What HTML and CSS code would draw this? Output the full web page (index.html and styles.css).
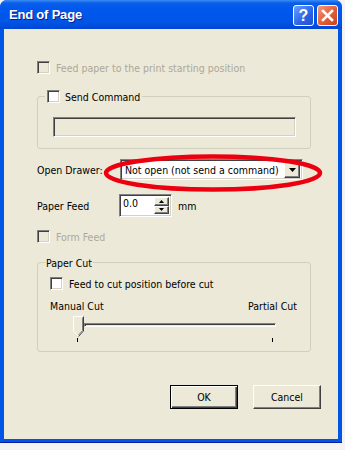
FILE: index.html
```html
<!DOCTYPE html>
<html lang="en">
<head>
    <meta charset="UTF-8">
    <title>End of Page</title>
    <link rel="stylesheet" href="styles.css">
</head>
<body>
<div class="window">
    <div class="titlebar">
        <span class="title">End of Page</span>
        <div class="tb-buttons">
            <span class="tb help">?</span>
            <span class="tb close">
                <svg width="13" height="13" viewBox="0 0 13 13"><path d="M2 2 L11 11 M11 2 L2 11" stroke="#fff" stroke-width="2.6" stroke-linecap="square"/></svg>
            </span>
        </div>
    </div>
    <div class="client">
        <!-- disabled option -->
        <div class="check-row disabled first">
            <span class="check"></span>
            <span>Feed paper to the print starting position</span>
        </div>

        <div class="group send">
            <div class="legend">
                <span class="check"></span>
                <span class="legend-text">Send Command</span>
            </div>
            <div class="edit off"></div>
        </div>

        <div class="field-row drawer">
            <span class="label">Open Drawer:</span>
            <div class="combo">
                <span class="combo-text">Not open (not send a command)</span>
                <span class="combo-btn"><svg width="7" height="4" viewBox="0 0 7 4"><path d="M0 0 H7 L3.5 4 Z" fill="#000"/></svg></span>
            </div>
        </div>

        <div class="field-row feed">
            <span class="label">Paper Feed</span>
            <div class="spin">
                <span class="spin-text">0.0</span>
                <span class="spin-btns">
                    <span class="spin-btn"><svg width="5" height="3" viewBox="0 0 5 3"><path d="M2.5 0 L5 3 H0 Z" fill="#000"/></svg></span>
                    <span class="spin-btn"><svg width="5" height="3" viewBox="0 0 5 3"><path d="M0 0 H5 L2.5 3 Z" fill="#000"/></svg></span>
                </span>
            </div>
            <span class="unit">mm</span>
        </div>

        <div class="check-row disabled formfeed">
            <span class="check"></span>
            <span>Form Feed</span>
        </div>

        <div class="group cut">
            <div class="legend">
                <span class="legend-text">Paper Cut</span>
            </div>
            <div class="check-row inner">
                <span class="check"></span>
                <span>Feed to cut position before cut</span>
            </div>
            <div class="slider-labels">
                <span>Manual Cut</span>
                <span>Partial Cut</span>
            </div>
            <div class="slider">
                <svg class="thumb" width="11" height="21" viewBox="0 0 11 21">
                    <path d="M0.5 0.5 H10.5 V15 L5.5 20.5 L0.5 15 Z" fill="#ece9d8" stroke="#fff"/>
                    <path d="M10.5 0.5 V15 L5.5 20.5" fill="none" stroke="#404040"/>
                    <path d="M9.5 1.5 V14.6 L5.5 19" fill="none" stroke="#808080"/>
                </svg>
                <div class="track"></div>
            </div>
            <div class="ticks">
                <span class="tick"></span>
                <span class="tick"></span>
            </div>
        </div>

        <div class="buttons">
            <span class="btn default">OK</span>
            <span class="btn">Cancel</span>
        </div>

        <svg class="mark" width="222" height="40" viewBox="0 0 222 40">
            <ellipse cx="111" cy="20" rx="107" ry="16.5" fill="none" stroke="#ec0010" stroke-width="4.5"/>
        </svg>
    </div>
</div>
</body>
</html>
```

FILE: styles.css
```css
* {
    margin: 0;
    padding: 0;
    box-sizing: border-box;
}

body {
    background: #f3f3f3;
    font-family: "DejaVu Sans Condensed", "Liberation Sans", sans-serif;
    font-size: 10.5px;
    color: #000;
}

.window {
    width: 342px;
    height: 443px;
    background: #0055e5;
    border-radius: 7px 7px 0 0;
    display: flex;
    flex-direction: column;
    padding: 0 4px 3px 4px;
    border-bottom: 1px solid #001ea0;
}

.titlebar {
    height: 29px;
    display: flex;
    align-items: center;
    justify-content: space-between;
    margin: 0 -4px;
    padding: 0 4px 0 9px;
    border-radius: 7px 7px 0 0;
    background: linear-gradient(#3b8cf5 0px, #0a5fe8 3px, #0058ee 8px, #0055e5 22px, #0046d4 29px);
}

.title {
    color: #fff;
    font-family: "Liberation Sans", sans-serif;
    font-weight: bold;
    font-size: 13px;
    text-shadow: 1px 1px 0 #0a1d8c;
    letter-spacing: -0.2px;
}

.tb-buttons {
    display: flex;
    gap: 3px;
    margin-top: 2px;
}

.tb {
    width: 21px;
    height: 21px;
    border: 1px solid #fff;
    border-radius: 3px;
    display: flex;
    align-items: center;
    justify-content: center;
}

.help {
    background: linear-gradient(135deg, #6aa0ff, #2a63e6 60%, #2050d0);
    color: #fff;
    font-family: "Liberation Sans", sans-serif;
    font-weight: bold;
    font-size: 16px;
}

.close {
    background: linear-gradient(135deg, #f49a7c, #e35c36 55%, #c8431e);
}

.client {
    flex: 1;
    background: #ece9d8;
    position: relative;
    display: flex;
    flex-direction: column;
    padding-left: 33px;
}

.check {
    width: 13px;
    height: 13px;
    background: #fff;
    border-top: 1px solid #808080;
    border-left: 1px solid #808080;
    border-right: 1px solid #fff;
    border-bottom: 1px solid #fff;
    box-shadow: inset 1px 1px 0 #404040, inset -1px -1px 0 #d4d0c8;
    flex: none;
}

.check-row {
    display: flex;
    align-items: center;
    gap: 6px;
    height: 13px;
}

.disabled {
    color: #aca899;
}

.disabled .check {
    background: #ece9d8;
}

.first {
    margin-top: 32px;
}

.group {
    position: relative;
    border: 1px solid #d0d0bf;
    border-radius: 3px;
    width: 274px;
}

.legend {
    position: absolute;
    top: -7px;
    left: 7px;
    background: #ece9d8;
    padding: 0 2px;
    display: flex;
    align-items: center;
    gap: 5px;
    height: 13px;
}

.send {
    margin-top: 22px;
    height: 53px;
    padding: 20px 0 0 15px;
}

.edit {
    width: 243px;
    height: 20px;
    border-top: 1px solid #808080;
    border-left: 1px solid #808080;
    border-right: 1px solid #fff;
    border-bottom: 1px solid #fff;
    box-shadow: inset 1px 1px 0 #404040, inset -1px -1px 0 #d4d0c8;
}

.edit.off {
    background: #ece9d8;
}

.field-row {
    display: flex;
    align-items: center;
}

.label {
    width: 83px;
}

.drawer {
    margin-top: 10px;
    height: 21px;
}

.combo {
    width: 183px;
    height: 21px;
    background: #fff;
    display: flex;
    align-items: center;
    justify-content: space-between;
    border-top: 1px solid #808080;
    border-left: 1px solid #808080;
    border-right: 1px solid #fff;
    border-bottom: 1px solid #fff;
    box-shadow: inset 1px 1px 0 #404040, inset -1px -1px 0 #d4d0c8;
    padding: 2px 2px 2px 4px;
}

.combo-btn,
.spin-btn {
    background: #ece9d8;
    display: flex;
    align-items: center;
    justify-content: center;
    border-top: 1px solid #fff;
    border-left: 1px solid #fff;
    border-right: 1px solid #404040;
    border-bottom: 1px solid #404040;
    box-shadow: inset -1px -1px 0 #808080;
}

.combo-btn {
    width: 16px;
    height: 17px;
}

.feed {
    margin-top: 14px;
    height: 23px;
}

.label + .spin {
    margin-left: -1px;
}

.spin {
    display: flex;
    height: 23px;
    width: 53px;
    background: #fff;
    border-top: 1px solid #808080;
    border-left: 1px solid #808080;
    border-right: 1px solid #fff;
    border-bottom: 1px solid #fff;
    box-shadow: inset 1px 1px 0 #404040, inset -1px -1px 0 #d4d0c8;
    padding: 2px 2px 2px 3px;
}

.spin-text {
    flex: 1;
    line-height: 12px;
}

.spin-btns {
    display: flex;
    flex-direction: column;
    width: 15px;
}

.spin-btn {
    flex: 1;
}

.unit {
    margin-left: 6px;
}

.formfeed {
    margin-top: 13px;
}

.cut {
    margin-top: 19px;
    height: 90px;
    padding: 14px 0 0 12px;
}

.cut .legend {
    padding: 0 1px;
}

.slider-labels {
    display: flex;
    justify-content: space-between;
    width: 247px;
    margin-top: 10px;
    height: 12px;
}

.slider {
    display: flex;
    align-items: center;
    margin: 4px 0 0 23px;
    width: 203px;
}

.thumb {
    flex: none;
}

.track {
    flex: 1;
    height: 4px;
    border-top: 1px solid #808080;
    border-left: 1px solid #808080;
    border-bottom: 1px solid #fff;
    border-right: 1px solid #fff;
    box-shadow: inset 1px 1px 0 #404040;
    margin-bottom: 4px;
}

.ticks {
    display: flex;
    justify-content: space-between;
    width: 196px;
    margin: 1px 0 0 27px;
}

.tick {
    width: 1px;
    height: 4px;
    background: #000;
}

.buttons {
    display: flex;
    justify-content: flex-end;
    gap: 15px;
    margin: 33px 17px 0 0;
}

.btn {
    width: 68px;
    height: 24px;
    display: flex;
    align-items: center;
    justify-content: center;
    background: #ece9d8;
    border-top: 1px solid #fff;
    border-left: 1px solid #fff;
    border-right: 1px solid #404040;
    border-bottom: 1px solid #404040;
    box-shadow: inset -1px -1px 0 #808080;
}

.btn.default {
    border: 1px solid #000;
    box-shadow: inset 1px 1px 0 #fff, inset -1px -1px 0 #404040, inset -2px -2px 0 #808080;
}

.mark {
    position: absolute;
    left: 98px;
    top: 124px;
}
```
